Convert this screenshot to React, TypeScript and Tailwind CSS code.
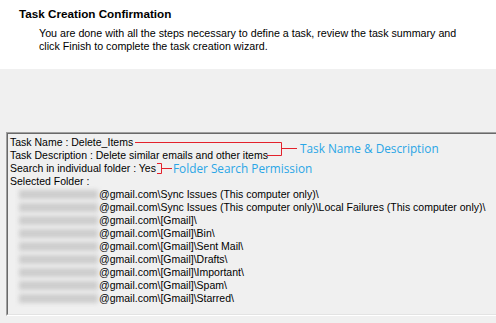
import React from "react";

const folders = [
  "Sync Issues (This computer only)\\",
  "Sync Issues (This computer only)\\Local Failures (This computer only)\\",
  "[Gmail]\\",
  "[Gmail]\\Bin\\",
  "[Gmail]\\Sent Mail\\",
  "[Gmail]\\Drafts\\",
  "[Gmail]\\Important\\",
  "[Gmail]\\Spam\\",
  "[Gmail]\\Starred\\",
];

export default function App() {
  return (
    <div className="relative w-[496px] h-[323px] overflow-hidden bg-[#f0f0f0] text-black font-['Liberation_Sans',Arial,sans-serif] text-[10.5px]">
      {/* wizard header */}
      <div className="h-[69px] bg-white pt-[7px]">
        <div className="pl-[19px] font-bold text-[11.7px] leading-[14px]">Task Creation Confirmation</div>
        <div className="pl-[39px] pt-[6px] text-[10.7px] leading-[13px] w-[480px]">
          You are done with all the steps necessary to define a task, review the task summary and
          <br />
          click Finish to complete the task creation wizard.
        </div>
      </div>

      {/* summary box */}
      <div className="ml-[6px] mt-[63px] w-[520px] border-t border-l border-[#a0a0a0] border-b border-b-white">
        <div className="h-[182px] border-t border-l border-[#696969] border-b border-b-[#e3e3e3] bg-[#f0f0f0] pl-[2px] pt-[2px] leading-[13px]">
          <div>Task Name : Delete_Items</div>
          <div>Task Description : Delete similar emails and other items</div>
          <div>Search in individual folder : Yes</div>
          <div>Selected Folder :</div>
          {folders.map((f) => (
            <div key={f} className="flex items-center h-[13px]">
              <div className="ml-[9px] w-[80px] h-[13px] flex items-center">
                <div className="w-[79px] h-[9px] bg-[#cdcdcd] blur-[2px]" />
              </div>
              <span>@gmail.com\{f}</span>
            </div>
          ))}
        </div>
      </div>

      {/* annotations */}
      <svg className="absolute top-0 left-0" width="496" height="323" fill="none" stroke="#e3212b" strokeWidth="1">
        <path d="M135 142.5 H281.5 V155.5 H267" />
        <path d="M281.5 148.5 H297" />
        <path d="M157 163.5 H161.5 V173.5 H157" />
        <path d="M161.5 168.5 H172" />
      </svg>
      <div className="absolute left-[300px] top-[140px] text-[11.8px] leading-[16px] text-[#2aa6e6] font-['Open_Sans',sans-serif]">
        Task Name &amp; Description
      </div>
      <div className="absolute left-[173px] top-[160px] text-[11.8px] leading-[16px] text-[#2aa6e6] font-['Open_Sans',sans-serif]">
        Folder Search Permission
      </div>
    </div>
  );
}
